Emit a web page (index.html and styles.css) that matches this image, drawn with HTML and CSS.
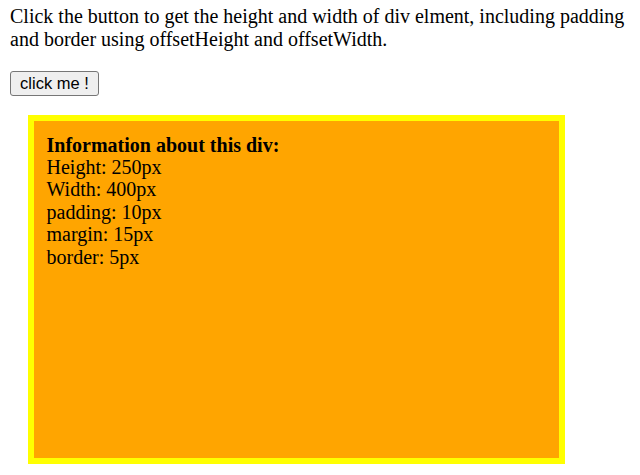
FILE: index.html
```html
<!DOCTYPE html>
<html>
<head>
<meta charset="utf-8">
<link rel="stylesheet" href="styles.css">
</head>
<body>
<p class="intro">Click the button to get the height and width of div elment, including padding and border using offsetHeight and offsetWidth.</p>
<button class="btn">click me !</button>
<div class="box">
  <div class="info-title">Information about this div:</div>
  <div class="info-line">Height: 250px</div>
  <div class="info-line">Width: 400px</div>
  <div class="info-line">padding: 10px</div>
  <div class="info-line">margin: 15px</div>
  <div class="info-line">border: 5px</div>
</div>
</body>
</html>
```
FILE: styles.css
```css
html, body {
  margin: 0;
  background: #fff;
}
body {
  padding: 5px 10px 0 10px;
  font-family: "Liberation Serif", "Times New Roman", serif;
  font-size: 20px;
  line-height: 23px;
  color: #000;
}
.intro {
  margin: 0 0 20px 0;
}
.btn {
  display: block;
  box-sizing: border-box;
  width: 89px;
  height: 25px;
  padding: 0;
  font-family: "Liberation Sans", Arial, sans-serif;
  font-size: 16.5px;
  color: #000;
  background: #efefef;
  border: 1px solid #767676;
  border-radius: 3px;
}
.box {
  box-sizing: content-box;
  width: 500px;
  height: 312px;
  padding: 12.5px;
  margin: 19px 18px;
  border: 6px solid #ffff00;
  background: #ffa500;
  line-height: 22.4px;
}
.info-title {
  font-weight: bold;
}
```
